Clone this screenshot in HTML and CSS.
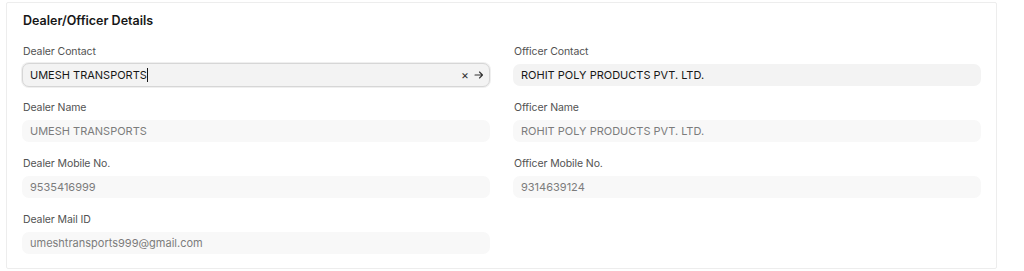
FILE: index.html
```html
<!DOCTYPE html>
<html lang="en">
<head>
    <meta charset="UTF-8">
    <meta name="viewport" content="width=device-width, initial-scale=1.0">
    <title>Dealer/Officer Details</title>
    <link rel="stylesheet" href="styles.css">
</head>
<body>

    <div class="page">
        <div class="section">
            <h3 class="section-title">Dealer/Officer Details</h3>
            <div class="columns">
                <div class="column">
                    <div class="field">
                        <div class="label">Dealer Contact</div>
                        <div class="control link focused">
                            <span class="value">UMESH TRANSPORTS</span><span class="caret"></span>
                            <span class="actions">
                                <span class="clear">&times;</span>
                                <svg class="arrow" width="10" height="10" viewBox="0 0 10 10">
                                    <path d="M1 5h7.5M5.5 2l3 3-3 3" fill="none" stroke="#333" stroke-width="1.1" stroke-linecap="round" stroke-linejoin="round"/>
                                </svg>
                            </span>
                        </div>
                    </div>
                    <div class="field">
                        <div class="label">Dealer Name</div>
                        <div class="control readonly">UMESH TRANSPORTS</div>
                    </div>
                    <div class="field">
                        <div class="label">Dealer Mobile No.</div>
                        <div class="control readonly">9535416999</div>
                    </div>
                    <div class="field">
                        <div class="label">Dealer Mail ID</div>
                        <div class="control readonly">umeshtransports999@gmail.com</div>
                    </div>
                </div>
                <div class="column">
                    <div class="field">
                        <div class="label">Officer Contact</div>
                        <div class="control link">ROHIT POLY PRODUCTS PVT. LTD.</div>
                    </div>
                    <div class="field">
                        <div class="label">Officer Name</div>
                        <div class="control readonly">ROHIT POLY PRODUCTS PVT. LTD.</div>
                    </div>
                    <div class="field">
                        <div class="label">Officer Mobile No.</div>
                        <div class="control readonly">9314639124</div>
                    </div>
                </div>
            </div>
        </div>
    </div>

</body>
</html>
```

FILE: styles.css
```css
body {
    margin: 0;
    font-family: Inter, "Noto Sans", sans-serif;
    background-color: #fff;
    color: #1f272e;
}
.page {
    padding: 2px 27px 0 6px;
}
.section {
    border: 1px solid #ededed;
    border-radius: 2px;
    padding: 8px 15px 15px 15px;
    height: 267px;
    box-sizing: border-box;
}
.section-title {
    margin: 0 0 0 1px;
    font-size: 12.5px;
    font-weight: 600;
    line-height: 20px;
    color: #171717;
}
.columns {
    display: grid;
    grid-template-columns: 1fr 1fr;
    column-gap: 23px;
    margin-top: 13px;
}
.column {
    display: flex;
    flex-direction: column;
    gap: 14px;
}
.field {
    display: flex;
    flex-direction: column;
    gap: 4px;
}
.label {
    font-size: 10.5px;
    line-height: 16px;
    letter-spacing: -0.1px;
    color: #525252;
    padding-left: 1px;
}
.control {
    height: 22px;
    line-height: 22px;
    border-radius: 7px;
    padding: 0 8px;
    font-size: 11px;
    display: flex;
    align-items: center;
}
.link {
    background-color: #f3f3f3;
    color: #171717;
}
.readonly {
    background-color: #f8f8f8;
    color: #7c7c7c;
}
.focused {
    height: 24px;
    margin: -1px 0 -1px 0;
    border: 1px solid #d6d6d6;
    box-shadow: 0 0 0 1px #efefef;
    padding: 0 5px 0 7px;
    box-sizing: border-box;
}
.caret {
    display: inline-block;
    width: 1px;
    height: 14px;
    background-color: #171717;
}
.actions {
    margin-left: auto;
    display: flex;
    align-items: center;
    gap: 5px;
    color: #333;
}
.clear {
    font-size: 12px;
    line-height: 12px;
}
```
